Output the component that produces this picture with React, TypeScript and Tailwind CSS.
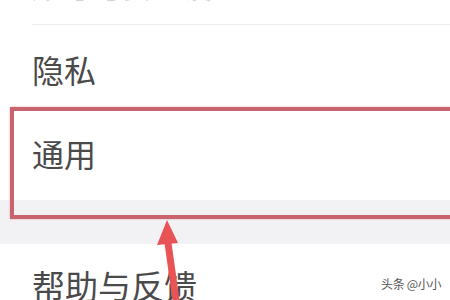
import React from "react";

const rowText = "text-[32px] leading-none text-[#4a4a4a]";

export default function App() {
  return (
    <div
      className="relative w-[450px] h-[300px] overflow-hidden bg-white"
      style={{ fontFamily: '"Noto Sans CJK SC", "Noto Sans", sans-serif' }}
    >
      {/* previous row, mostly scrolled out */}
      <div className="h-[25px] pl-[32px] overflow-hidden">
        <div className="border-b border-[#ececec] h-[25px] flex items-start overflow-hidden">
          <span className="-mt-[34px] text-[30px] leading-[38px] text-[#d4d4d4] blur-[0.5px]">
            账号与安全设置
          </span>
        </div>
      </div>

      {/* 隐私 */}
      <div className="h-[86px] pl-[32px] flex items-center">
        <span className={`${rowText} mt-[2px]`}>隐私</span>
      </div>

      {/* 通用 */}
      <div className="h-[89px] pl-[32px] flex items-center">
        <span className={`${rowText} mt-[-6px]`}>通用</span>
      </div>

      {/* group gap */}
      <div className="h-[44px] bg-[#f2f2f5]" />

      {/* 帮助与反馈 */}
      <div className="h-[56px] pl-[32px] pt-[25px]">
        <span className={`${rowText} text-[33px]`}>帮助与反馈</span>
      </div>

      {/* annotation box */}
      <div className="absolute left-[10px] top-[107px] w-[480px] h-[112px] border-[4px] border-[#c9646e] shadow-[0_0_2px_rgba(220,120,130,0.6)]" />

      {/* annotation arrow */}
      <svg
        className="absolute left-[150px] top-[215px]"
        width="40"
        height="85"
        viewBox="0 0 40 85"
      >
        <path d="M18 28 L26 85" stroke="#e85456" strokeWidth="7" />
        <path d="M17 5 L7 30 L28 28 Z" fill="#e85456" />
      </svg>

      {/* watermark */}
      <div className="absolute left-[381px] top-[278px] text-[12px] leading-none text-[#555] tracking-tight">
        头条 @小小
      </div>
    </div>
  );
}
